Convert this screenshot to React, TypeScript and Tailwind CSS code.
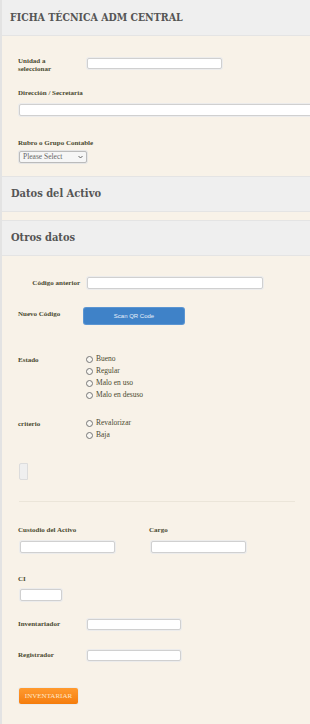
import React from "react"

const serif = { fontFamily: '"Liberation Serif", "DejaVu Serif", serif' }
const headFont = { fontFamily: '"DejaVu Serif Condensed", "DejaVu Serif", serif', fontStretch: "condensed" as const }

function Field({ className = "" }: { className?: string }) {
  return (
    <div className={`rounded-[3px] bg-[#ececec] p-[1px] ${className}`}>
      <div className="h-full w-full rounded-[2px] border border-[#d0d0d0] bg-white" />
    </div>
  )
}

function Radio({ label }: { label: string }) {
  return (
    <div className="flex h-[12px] items-center gap-[3px]">
      <span className="h-[7px] w-[7px] rounded-full border border-[#777] bg-[#f9f7f2]" />
      <span className="text-[7.5px] text-[#4a4a30]">{label}</span>
    </div>
  )
}

function SectionHeader({ title }: { title: string }) {
  return (
    <div className="flex h-[36px] items-center border-y border-[#e4e4e4] bg-[#efefef] px-[9px]">
      <h2 style={headFont} className="text-[11px] font-bold text-[#555]">{title}</h2>
    </div>
  )
}

export default function App() {
  return (
    <div style={serif} className="min-h-[724px] w-[310px] overflow-hidden border-l-2 border-[#e3e3e3] bg-[#f8f2e8]">
      {/* Header */}
      <div className="flex h-[36px] items-center border-b border-[#e4e4e4] bg-[#efefef] px-[8px]">
        <h1 style={headFont} className="text-[10.5px] font-bold text-[#555]">FICHA TÉCNICA ADM CENTRAL</h1>
      </div>

      {/* Section 1 */}
      <div className="px-[16px] pb-[13px] pt-[21px]">
        <div className="flex items-start">
          <label className="w-[68px] text-[7px] font-bold leading-[8px] text-[#4a4a30]">
            Unidad a<br />seleccionar
          </label>
          <Field className="h-[13px] w-[137px]" />
        </div>
        <div className="mt-[15px] text-[7px] font-bold text-[#4a4a30]">Dirección / Secretaría</div>
        <Field className="mt-[4px] h-[14px] w-[300px]" />
        <div className="mt-[21px] text-[7px] font-bold text-[#4a4a30]">Rubro o Grupo Contable</div>
        <div className="mt-[3px] ml-[1px] flex h-[12px] w-[68px] items-center justify-between rounded-[2px] border border-[#bbb] bg-[#f6f6f6] px-[3px] shadow-[0_0_0_1px_#e6e6e6]">
          <span className="text-[7.5px] text-[#666]">Please Select</span>
          <svg width="5" height="4" viewBox="0 0 5 4">
            <path d="M0.5 1 L2.5 3 L4.5 1" fill="none" stroke="#555" strokeWidth="0.9" />
          </svg>
        </div>
      </div>

      <SectionHeader title="Datos del Activo" />
      <div className="h-[8px]" />
      <SectionHeader title="Otros datos" />

      {/* Otros datos */}
      <div className="px-[16px] pt-[20px]">
        <div className="flex items-center">
          <label className="w-[68px] pr-[6px] text-right text-[7px] font-bold text-[#4a4a30]">Código anterior</label>
          <Field className="h-[14px] w-[178px]" />
        </div>
        <div className="mt-[18px] flex items-start">
          <label className="w-[66px] pt-[1px] text-[7px] font-bold text-[#4a4a30]">Nuevo Código</label>
          <button
            style={{ fontFamily: '"Liberation Sans", Arial, sans-serif' }}
            className="flex h-[16px] w-[100px] items-center justify-center rounded-[2px] bg-[#3f82c8] text-[6px] text-[#e8f0fa] shadow-[0_0_0_1px_#5b95d2]"
          >
            Scan QR Code
          </button>
        </div>

        <div className="mt-[29px] flex items-start">
          <label className="w-[68px] pt-[2px] text-[7px] font-bold text-[#4a4a30]">Estado</label>
          <div>
            <Radio label="Bueno" />
            <Radio label="Regular" />
            <Radio label="Malo en uso" />
            <Radio label="Malo en desuso" />
          </div>
        </div>

        <div className="mt-[16px] flex items-start">
          <label className="w-[68px] pt-[2px] text-[7px] font-bold text-[#4a4a30]">criterio</label>
          <div>
            <Radio label="Revalorizar" />
            <Radio label="Baja" />
          </div>
        </div>

        <div className="mt-[22px] ml-[1px] h-[17px] w-[9px] rounded-l-[2px] border border-[#dcdcdc] bg-[#efefef]" />

        <div className="mt-[21px] ml-[1px] h-px w-[276px] bg-[#ebe5d9]" />

        <div className="mt-[23px] flex">
          <div className="w-[131px]">
            <div className="text-[7px] font-bold text-[#4a4a30]">Custodio del Activo</div>
            <Field className="mt-[4px] ml-[1px] h-[14px] w-[97px]" />
          </div>
          <div>
            <div className="text-[7px] font-bold text-[#4a4a30]">Cargo</div>
            <Field className="mt-[4px] ml-[1px] h-[14px] w-[97px]" />
          </div>
        </div>

        <div className="mt-[20px] text-[7px] font-bold text-[#4a4a30]">CI</div>
        <Field className="mt-[4px] ml-[1px] h-[14px] w-[44px]" />

        <div className="mt-[16px] flex items-start">
          <label className="w-[68px] pt-[1px] text-[7px] font-bold text-[#4a4a30]">Inventariador</label>
          <Field className="h-[13px] w-[96px]" />
        </div>
        <div className="mt-[18px] flex items-start">
          <label className="w-[68px] pt-[1px] text-[7px] font-bold text-[#4a4a30]">Registrador</label>
          <Field className="h-[13px] w-[96px]" />
        </div>

        <button className="mt-[26px] ml-[1px] flex h-[16px] w-[59px] items-center justify-center rounded-[2px] bg-gradient-to-b from-[#ff9a2e] to-[#f57d0a] text-[7px] text-[#fde7c9] shadow-[0_0_0_1px_#ececec]">
          INVENTARIAR
        </button>
      </div>
    </div>
  )
}
